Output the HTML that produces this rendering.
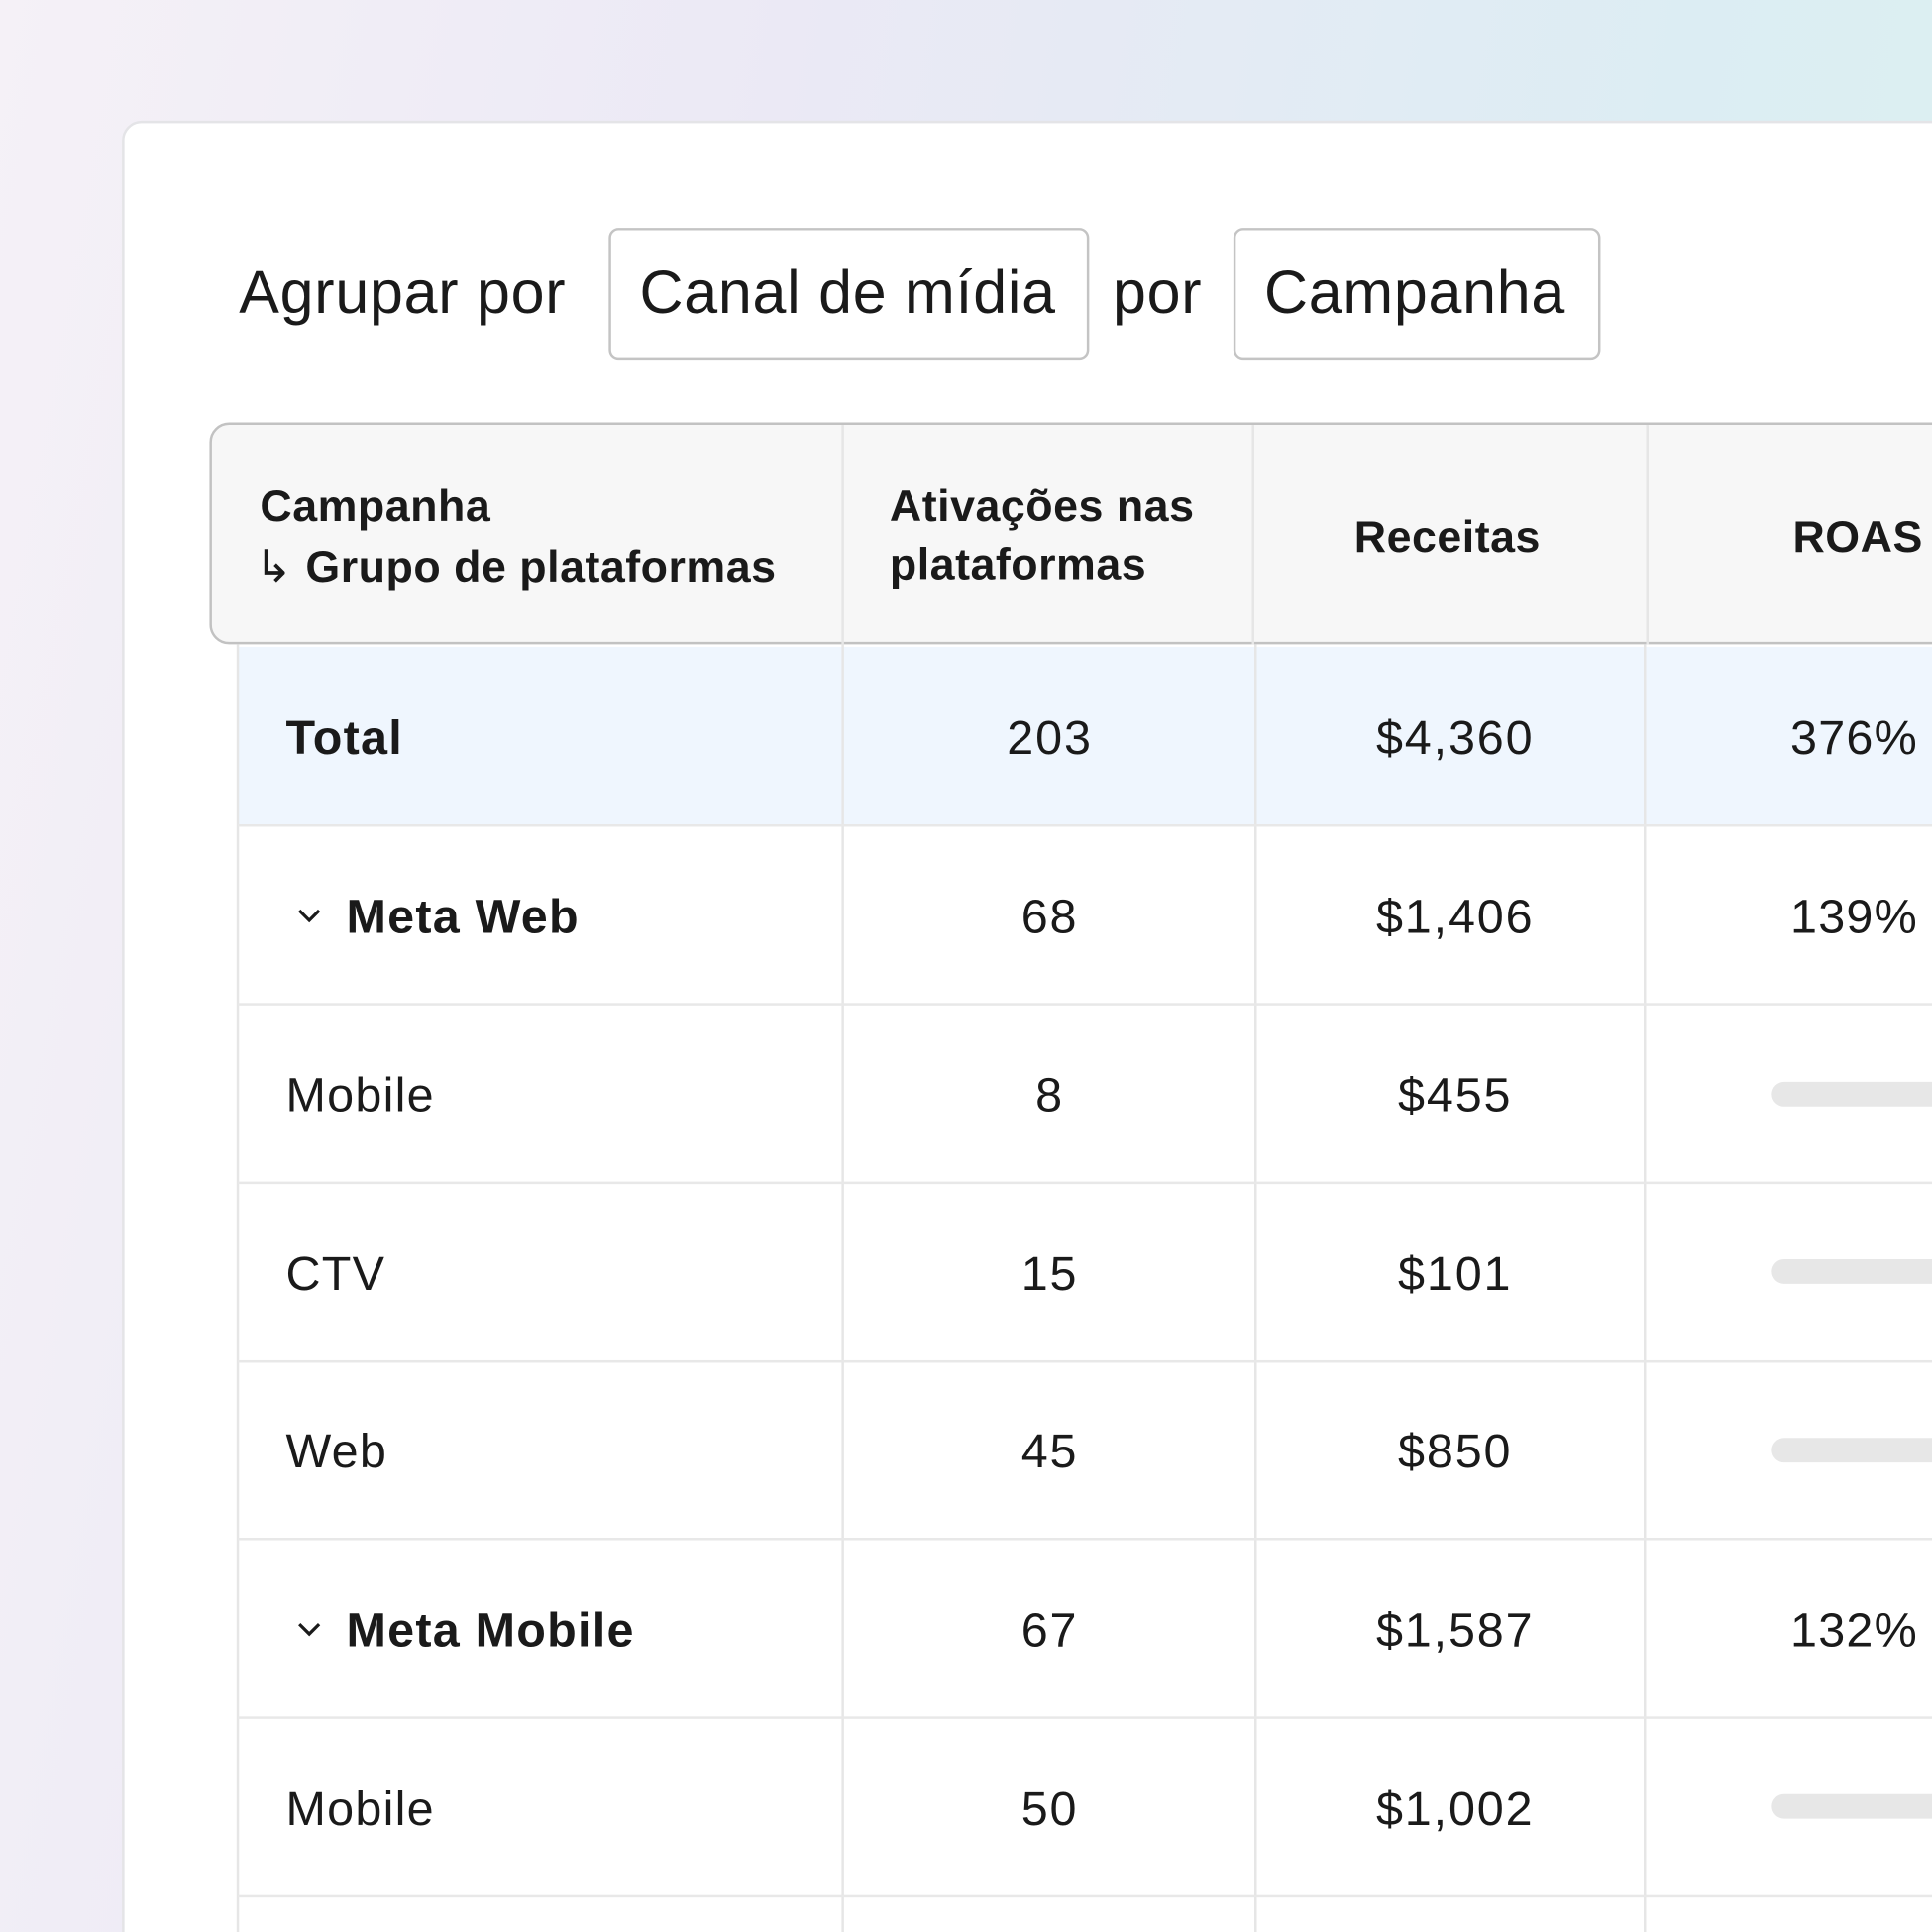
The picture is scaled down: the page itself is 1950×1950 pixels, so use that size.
<!DOCTYPE html>
<html><head><meta charset="utf-8"><style>
html,body{margin:0;padding:0;width:1950px;height:1950px;overflow:hidden}
#clip{position:relative;width:1950px;height:1950px;overflow:hidden;background:linear-gradient(100deg,#f5f1f7 0%,#ebe9f5 35%,#dcedf3 75%,#dcf2f1 100%)}
#w{position:absolute;left:0;top:0;width:1568px;height:1568px;overflow:hidden;transform:scale(1.24362);transform-origin:0 0;font-family:"Liberation Sans",sans-serif;color:#1a1a1a}
.card{position:absolute;left:99px;top:98px;width:1500px;height:1500px;background:#fff;border:2px solid #e4e4e7;border-radius:16px}
.t{position:absolute;white-space:nowrap}
.big{font-size:49px;letter-spacing:0.6px}
.btn{position:absolute;top:185px;height:107px;border:2px solid #c4c4c4;border-radius:8px;background:#fff;box-sizing:border-box}
.hdr{position:absolute;left:170px;top:343px;width:1450px;height:180px;background:#f7f7f7;border:2px solid #c2c2c2;border-radius:16px 0 0 16px;box-sizing:border-box}
.vl{position:absolute;width:2px;background:#e6e6e6}
.hl{position:absolute;left:193px;width:1400px;height:2px;background:#e8e8e8}
.h{font-weight:bold;font-size:36px;letter-spacing:0.4px}
.r{font-size:39px;letter-spacing:1px}
.c{font-size:39px;letter-spacing:1.5px;transform:translateX(-50%)}
.bar{position:absolute;left:1438px;width:200px;height:20px;border-radius:10px;background:#e7e7e7}
</style></head><body><div id="clip"><div id="w">
<div class="card"></div>
<div class="t big" style="left:194px;top:210px">Agrupar por</div>
<div class="btn" style="left:494px;width:390px"></div>
<div class="t big" style="left:519px;top:210px">Canal de mídia</div>
<div class="t big" style="left:903px;top:210px">por</div>
<div class="btn" style="left:1001px;width:298px"></div>
<div class="t big" style="left:1026px;top:210px">Campanha</div>

<div class="hdr"></div>
<div style="position:absolute;left:193px;top:525px;width:1400px;height:145px;background:#eff6fe"></div>
<div class="vl" style="left:683px;top:345px;height:1300px"></div>
<div class="vl" style="left:1016px;top:345px;height:178px"></div>
<div class="vl" style="left:1336px;top:345px;height:178px"></div>
<div class="vl" style="left:1018px;top:523px;height:1100px"></div>
<div class="vl" style="left:1334px;top:523px;height:1100px"></div>
<div class="vl" style="left:192px;top:523px;height:1100px"></div>
<div class="hl" style="top:669px"></div>
<div class="hl" style="top:814px"></div>
<div class="hl" style="top:959px"></div>
<div class="hl" style="top:1104px"></div>
<div class="hl" style="top:1248px"></div>
<div class="hl" style="top:1393px"></div>
<div class="hl" style="top:1538px"></div>

<div class="t h" style="left:211px;top:390px">Campanha</div>
<div class="t h" style="left:207px;top:439px"><span style="font-weight:normal">↳</span> Grupo de plataformas</div>
<div class="t h" style="left:722px;top:390px">Ativações nas</div>
<div class="t h" style="left:722px;top:437px">plataformas</div>
<div class="t h" style="left:1099px;top:415px">Receitas</div>
<div class="t h" style="left:1455px;top:415px">ROAS</div>

<div class="t r" style="left:232px;top:578px;font-weight:bold">Total</div>
<div class="t c" style="left:852px;top:578px">203</div>
<div class="t c" style="left:1181px;top:578px">$4,360</div>
<div class="t r" style="left:1453px;top:578px">376%</div>

<svg class="t" style="left:240px;top:736px" width="22" height="14"><path d="M3 3l8 8 8-8" stroke="#1a1a1a" stroke-width="2.6" fill="none"/></svg>
<div class="t r" style="left:281px;top:723px;font-weight:bold">Meta Web</div>
<div class="t c" style="left:852px;top:723px">68</div>
<div class="t c" style="left:1181px;top:723px">$1,406</div>
<div class="t r" style="left:1453px;top:723px">139%</div>

<div class="t r" style="left:232px;top:868px">Mobile</div>
<div class="t c" style="left:852px;top:868px">8</div>
<div class="t c" style="left:1181px;top:868px">$455</div>
<div class="bar" style="top:878px"></div>

<div class="t r" style="left:232px;top:1013px">CTV</div>
<div class="t c" style="left:852px;top:1013px">15</div>
<div class="t c" style="left:1181px;top:1013px">$101</div>
<div class="bar" style="top:1022px"></div>

<div class="t r" style="left:232px;top:1157px">Web</div>
<div class="t c" style="left:852px;top:1157px">45</div>
<div class="t c" style="left:1181px;top:1157px">$850</div>
<div class="bar" style="top:1167px"></div>

<svg class="t" style="left:240px;top:1315px" width="22" height="14"><path d="M3 3l8 8 8-8" stroke="#1a1a1a" stroke-width="2.6" fill="none"/></svg>
<div class="t r" style="left:281px;top:1302px;font-weight:bold">Meta Mobile</div>
<div class="t c" style="left:852px;top:1302px">67</div>
<div class="t c" style="left:1181px;top:1302px">$1,587</div>
<div class="t r" style="left:1453px;top:1302px">132%</div>

<div class="t r" style="left:232px;top:1447px">Mobile</div>
<div class="t c" style="left:852px;top:1447px">50</div>
<div class="t c" style="left:1181px;top:1447px">$1,002</div>
<div class="bar" style="top:1456px"></div>
</div></div></body></html>
